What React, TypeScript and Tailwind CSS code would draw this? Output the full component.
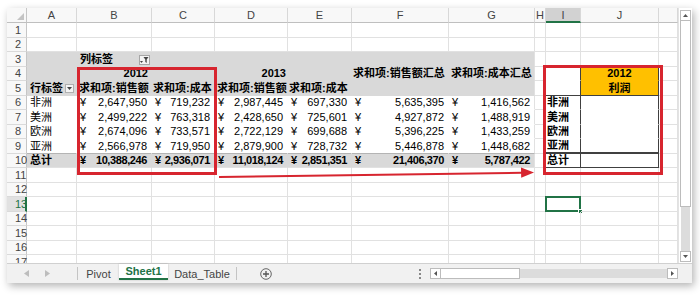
import React from "react"
import { twMerge } from "tailwind-merge"

const COLS = [
  { k: "A", w: "w-[50px]" },
  { k: "B", w: "w-[75px]" },
  { k: "C", w: "w-[63px]" },
  { k: "D", w: "w-[73px]" },
  { k: "E", w: "w-[64px]" },
  { k: "F", w: "w-[97px]" },
  { k: "G", w: "w-[86px]" },
  { k: "H", w: "w-[11px]" },
  { k: "I", w: "w-[35px]" },
  { k: "J", w: "w-[78px]" },
  { k: "K", w: "w-[19px]" },
]

const REGIONS = ["非洲", "美洲", "欧洲", "亚洲"]
const DATA = [
  ["2,647,950", "719,232", "2,987,445", "697,330", "5,635,395", "1,416,562"],
  ["2,499,222", "763,318", "2,428,650", "725,601", "4,927,872", "1,488,919"],
  ["2,674,096", "733,571", "2,722,129", "699,688", "5,396,225", "1,433,259"],
  ["2,566,978", "719,950", "2,879,900", "728,732", "5,446,878", "1,448,682"],
]
const TOTAL = ["10,388,246", "2,936,071", "11,018,124", "2,851,351", "21,406,370", "5,787,422"]

const GRID = "border-r border-b border-r-[#e1e1e1] border-b-[#e1e1e1]"
const GRAY = "bg-[#d9d9d9] border-r-[#d9d9d9] border-b-[#d9d9d9]"
const WHITE = "bg-white border-r-white border-b-white"
const DARK_R = "border-r-[#404040]"
const DARK_B = "border-b-[#404040]"

function Money({ v, bold }: { v: string; bold?: boolean }) {
  return (
    <div className={twMerge("flex w-full justify-between pl-[3px] pr-[4px]", bold && "font-bold tracking-[-0.4px]")}>
      <span>¥</span>
      <span>{v}</span>
    </div>
  )
}

function FilterBtn() {
  return (
    <div className="absolute right-[1px] top-[3px] flex h-[10px] w-[11px] items-center justify-center border border-[#a6a6a6] bg-[#f4f4f4]">
      <svg width="9" height="7" viewBox="0 0 9 7">
        <path d="M0 4h3L1.5 6z" fill="#444" />
        <path d="M3.5 0h5L6.7 2.5V6L5.3 5V2.5z" fill="#444" />
      </svg>
    </div>
  )
}

function DropBtn() {
  return (
    <div className="absolute right-[2px] top-[3px] flex h-[9px] w-[9px] items-center justify-center border border-[#b0b0b0] bg-[#f4f4f4]">
      <svg width="5" height="3" viewBox="0 0 5 3">
        <path d="M0 0h5L2.5 3z" fill="#444" />
      </svg>
    </div>
  )
}

function spec(r: number, ci: number): [React.ReactNode, string] {
  const k = COLS[ci].k

  // pivot table A3:G10
  if (ci <= 6 && r >= 3 && r <= 10) {
    const edge = k === "G" ? "border-r-[#e1e1e1]" : ""
    if (r <= 5) {
      let c: React.ReactNode = null
      if (r === 3 && k === "B") c = <><span className="pl-[3px] font-bold">列标签</span><FilterBtn /></>
      if (r === 4 && k === "B") c = <span className="ml-auto pr-[3px] font-bold">2012</span>
      if (r === 4 && k === "D") c = <span className="ml-auto pr-[1px] font-bold">2013</span>
      if (r === 4 && k === "F") c = <span className="pl-[1px] font-bold">求和项:销售额汇总</span>
      if (r === 4 && k === "G") c = <span className="pl-[2px] font-bold">求和项:成本汇总</span>
      if (r === 5 && k === "A") c = <><span className="pl-[3px] font-bold">行标签</span><DropBtn /></>
      if (r === 5 && (k === "B" || k === "D")) c = <span className="pl-[2px] font-bold">求和项:销售额</span>
      if (r === 5 && (k === "C" || k === "E")) c = <span className="pl-[1px] font-bold">求和项:成本</span>
      return [c, twMerge(GRAY, edge)]
    }
    if (r <= 9) {
      const c = k === "A" ? <span className="pl-[3px]">{REGIONS[r - 6]}</span> : <Money v={DATA[r - 6][ci - 1]} />
      return [c, twMerge(WHITE, edge, r === 9 && "border-b-[#b4b4b4]")]
    }
    const c = k === "A" ? <span className="pl-[3px] font-bold">总计</span> : <Money v={TOTAL[ci - 1]} bold />
    return [c, twMerge("bg-[#d9d9d9] border-r-[#d9d9d9]", edge)]
  }

  // summary table I4:J10
  if (k === "H" && r >= 4 && r <= 10) return [null, DARK_R]
  if ((k === "I" || k === "J") && r === 3) return [null, DARK_B]
  if (k === "I" && r >= 4 && r <= 10) {
    if (r === 4) return [null, twMerge(DARK_R, "border-b-white")]
    if (r === 5) return [null, twMerge(DARK_R, DARK_B)]
    const label = r === 10 ? "总计" : REGIONS[r - 6]
    const b = r === 9 ? "border-b-2 border-b-[#404040]" : r === 10 ? DARK_B : "border-b-white"
    return [<span className="pl-[1px] font-bold">{label}</span>, twMerge(DARK_R, b)]
  }
  if (k === "J" && r >= 4 && r <= 10) {
    if (r === 4) return [<span className="w-full text-center font-bold">2012</span>, twMerge("bg-[#ffc000]", DARK_R, "border-b-[#ffc000]")]
    if (r === 5) return [<span className="w-full text-center font-bold">利润</span>, twMerge("bg-[#ffc000]", DARK_R, DARK_B)]
    const b = r === 9 ? "border-b-2 border-b-[#404040]" : r === 10 ? DARK_B : "border-b-white"
    return [null, twMerge(DARK_R, b)]
  }

  if (k === "I" && r === 13)
    return [
      <div className="absolute -left-px -top-px bottom-[-1px] right-[-1px] border-2 border-[#217346]">
        <div className="absolute -bottom-[4px] -right-[4px] h-[5px] w-[5px] border border-white bg-[#217346]" />
      </div>,
      "",
    ]

  return [null, ""]
}

function Row({ n }: { n: number }) {
  const active = n === 13
  return (
    <div className="flex h-[14.5px] shrink-0">
      <div
        className={twMerge(
          "flex h-full w-[20px] shrink-0 items-center border-r border-b border-r-[#c6c6c6] border-b-[#dadada] bg-[#f8f8f8] pl-[8px] text-[#444]",
          active && "border-r-2 border-r-[#217346] bg-[#e1e1e1] text-[#217346]"
        )}
      >
        {n}
      </div>
      {COLS.map((col, ci) => {
        const [c, cls] = spec(n, ci)
        return (
          <div key={col.k} className={twMerge(col.w, "relative flex h-full shrink-0 items-center whitespace-nowrap", GRID, cls)}>
            {c}
          </div>
        )
      })}
    </div>
  )
}

function ArrowBox({ dir }: { dir: "up" | "down" | "left" | "right" }) {
  const d = { up: "M0 3L2.5 0L5 3z", down: "M0 0h5L2.5 3z", left: "M3 0v5L0 2.5z", right: "M0 0v5L3 2.5z" }[dir]
  const vert = dir === "up" || dir === "down"
  return (
    <div className="flex h-[11px] w-[11px] shrink-0 items-center justify-center border border-[#bcbcbc] bg-white">
      <svg width={vert ? 5 : 3} height={vert ? 3 : 5} viewBox={vert ? "0 0 5 3" : "0 0 3 5"}>
        <path d={d} fill="#555" />
      </svg>
    </div>
  )
}

export default function App() {
  const rows = Array.from({ length: 17 }, (_, i) => i + 1)
  return (
    <div className="relative h-[295px] w-[700px] overflow-hidden bg-white pl-[7px] pt-[8px] font-['Liberation_Sans','Noto_Sans_CJK_SC',sans-serif] text-[11px] leading-[14px] text-black">
      <div className="flex h-[275px] w-[685px] flex-col bg-white shadow-[2px_3px_8px_rgba(0,0,0,0.3)]">
        <div className="flex h-[255px]">
          {/* sheet grid */}
          <div className="flex w-[671px] flex-col overflow-hidden">
            <div className="flex h-[15px] shrink-0">
              <div className="relative w-[20px] shrink-0 border-r border-b border-r-[#c6c6c6] border-b-[#bfbfbf] bg-[#f8f8f8]">
                <svg className="absolute bottom-[2px] right-[2px]" width="7" height="7" viewBox="0 0 7 7">
                  <path d="M7 0v7H0z" fill="#c4c4c4" />
                </svg>
              </div>
              {COLS.map((col) => (
                <div
                  key={col.k}
                  className={twMerge(
                    col.w,
                    "flex shrink-0 items-center justify-center border-r border-b border-r-[#d8d8d8] border-b-[#bfbfbf] bg-[#f8f8f8] text-[#444]",
                    col.k === "I" && "border-b-2 border-b-[#217346] bg-[#d2d2d2]"
                  )}
                >
                  {col.k === "K" ? "" : col.k}
                </div>
              ))}
            </div>
            {rows.map((n) => (
              <Row key={n} n={n} />
            ))}
          </div>

          {/* vertical scrollbar */}
          <div className="flex w-[14px] flex-col items-center border-l border-[#e3e3e3] bg-white pb-[1px] pt-[2px]">
            <ArrowBox dir="up" />
            <div className="h-[186px] w-[11px] shrink-0 border border-t-0 border-[#bcbcbc] bg-white" />
            <div className="w-[9px] flex-1 bg-[#dcdcdc]" />
            <ArrowBox dir="down" />
          </div>
        </div>

        {/* sheet tabs */}
        <div className="flex h-[20px] items-start border-t border-[#d0d0d0] bg-[#f1f1f1] text-[#444]">
          <div className="flex h-[18px] w-[70px] shrink-0 items-center gap-[14px] pl-[17px] text-[#b5b5b5]">
            <svg width="6" height="7" viewBox="0 0 6 7"><path d="M5 0v7L0 3.5z" fill="#bdbdbd" /></svg>
            <svg width="6" height="7" viewBox="0 0 6 7"><path d="M1 0v7l5-3.5z" fill="#bdbdbd" /></svg>
          </div>
          <div className="mt-[3px] flex h-[13px] shrink-0 border-l border-r border-[#c4c4c4]">
            <div className="flex w-[41px] items-center justify-center">Pivot</div>
            <div className="-mt-[3px] flex h-[16px] w-[49px] items-center justify-center border-b-2 border-[#217346] bg-white font-bold text-[#217346] shadow-[0_0_2px_rgba(0,0,0,0.2)]">
              Sheet1
            </div>
            <div className="flex w-[68px] items-center justify-center">Data_Table</div>
          </div>
          <div className="ml-[23px] mt-[4px] flex h-[12px] w-[12px] shrink-0 items-center justify-center">
            <svg width="12" height="12" viewBox="0 0 12 12">
              <circle cx="6" cy="6" r="5.3" fill="none" stroke="#666" strokeWidth="1" />
              <path d="M6 3v6M3 6h6" stroke="#555" strokeWidth="1.3" />
            </svg>
          </div>
          <div className="flex-1" />
          <div className="mr-[8px] mt-[4px] flex h-[12px] w-[4px] flex-col items-center justify-between py-[1px]">
            <div className="h-[2px] w-[2px] bg-[#888]" />
            <div className="h-[2px] w-[2px] bg-[#888]" />
            <div className="h-[2px] w-[2px] bg-[#888]" />
          </div>
          <div className="mt-[4px] flex h-[11px] w-[248px] shrink-0">
            <ArrowBox dir="left" />
            <div className="h-[11px] w-[79px] shrink-0 border border-l-0 border-[#bcbcbc] bg-white" />
            <div className="my-[1px] flex-1 bg-[#dcdcdc]" />
            <ArrowBox dir="right" />
          </div>
          <div className="w-[14px] shrink-0" />
        </div>
      </div>

      {/* red annotations */}
      <svg className="pointer-events-none absolute left-0 top-0" width="700" height="295" viewBox="0 0 700 295">
        <rect x="78.5" y="68.5" width="137" height="105" fill="none" stroke="#d7252f" strokeWidth="3" />
        <rect x="544.5" y="66.5" width="117" height="107" fill="none" stroke="#d7252f" strokeWidth="3" />
        <path d="M219 177L522 172.8" stroke="#d7252f" strokeWidth="2" />
        <path d="M534 172.5L521 167.5L521.2 177.8z" fill="#d7252f" />
      </svg>
    </div>
  )
}
